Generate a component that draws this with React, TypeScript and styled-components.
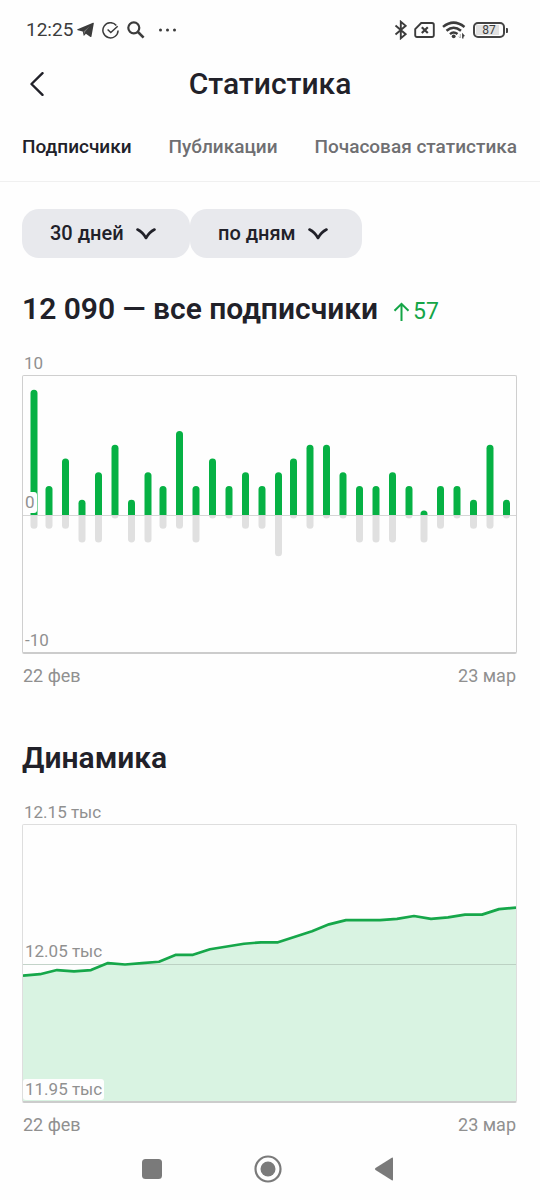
import React from "react";
import styled, { createGlobalStyle } from "styled-components";

const GlobalStyle = createGlobalStyle`
  *, *::before, *::after { box-sizing: border-box; }
  body {
    margin: 0;
    background: #fefefe;
    color: #212129;
    font-family: Roboto, "Noto Sans", sans-serif;
  }
  button, select { font: inherit; color: inherit; }
`;

const Screen = styled.div`
  display: flex;
  flex-direction: column;
  min-height: 100vh;
`;

const StatusBar = styled.div`
  display: flex;
  justify-content: space-between;
  align-items: center;
  height: 60px;
  padding: 0 32px 0 26px;
  color: #3c3c3c;
`;

const StatusGroup = styled.div<{ $gap: number }>`
  display: flex;
  align-items: center;
  gap: ${(p) => p.$gap}px;
`;

const Clock = styled.time`
  font-size: 19px;
  line-height: 24px;
  margin-right: -4px;
`;

const Icon = styled.svg`
  display: block;
  flex: none;
`;

const Battery = styled.div`
  display: flex;
  align-items: center;
`;

const BatteryBody = styled.div`
  display: flex;
  width: 32px;
  height: 16px;
  padding: 1px;
  border: 2px solid #444;
  border-radius: 5px;
`;

const BatteryLevel = styled.span`
  flex: 1;
  background: linear-gradient(to right, #e2e2e2 87%, transparent 87%);
  font-size: 12px;
  line-height: 11px;
  text-align: center;
`;

const BatteryTip = styled.span`
  width: 2px;
  height: 5px;
  margin-left: 1px;
  border-radius: 0 1px 1px 0;
  background: #444;
`;

const Header = styled.header`
  display: grid;
  grid-template-columns: 48px 1fr 48px;
  align-items: center;
  height: 48px;
  padding: 0 13px;
`;

const IconButton = styled.button`
  display: grid;
  place-items: center;
  height: 48px;
  padding: 0;
  border: 0;
  background: none;
  cursor: pointer;
`;

const Title = styled.h1`
  margin: 0;
  font-size: 30px;
  font-weight: 500;
  line-height: 40px;
  text-align: center;
`;

const Tabs = styled.nav`
  display: flex;
  justify-content: space-between;
  height: 74px;
  padding: 27px 23px 0 22px;
  border-bottom: 1px solid #f0f0f0;
`;

const Tab = styled.a<{ $active?: boolean }>`
  color: ${(p) => (p.$active ? "#212129" : "#6f6f72")};
  font-size: 19px;
  font-weight: 500;
  line-height: 24px;
  text-decoration: none;
  white-space: nowrap;
`;

const Main = styled.main`
  flex: 1;
  padding: 27px 23px 0 22px;
`;

const Filters = styled.div`
  display: flex;
`;

const Filter = styled.label`
  display: grid;
  align-items: center;
  & > * { grid-area: 1 / 1; }
  & > svg {
    justify-self: end;
    margin-right: 34px;
    pointer-events: none;
  }
`;

const FilterSelect = styled.select`
  appearance: none;
  height: 49px;
  padding: 0 66px 1px 28px;
  border: 0;
  border-radius: 17px;
  background: #e8e9ed;
  font-size: 20px;
  font-weight: 500;
`;

const HeadingRow = styled.div`
  display: flex;
  align-items: center;
  gap: 15px;
  margin-top: 31px;
`;

const Heading = styled.h2`
  margin: 0;
  font-size: 30px;
  font-weight: 600;
  line-height: 40px;
  white-space: nowrap;
`;

const Growth = styled.span`
  display: flex;
  align-items: center;
  gap: 3px;
  padding-top: 6px;
  color: #14a547;
  font-size: 23px;
  line-height: 28px;
`;

const Figure = styled.figure`
  margin: 23px 0 0;
  color: #909090;
  font-size: 18px;
  line-height: 22px;
`;

const TopLabel = styled.div`
  padding: 0 2px;
  margin-bottom: 1px;
  font-size: 17px;
`;

const Plot = styled.div<{ $line: string }>`
  position: relative;
  border: 1px solid ${(p) => p.$line};
  border-bottom: 2px solid #cccccc;
  border-radius: 2px;
`;

const PlotDrawing = styled.svg`
  display: block;
  width: 100%;
  height: auto;
`;

const AxisLabel = styled.span<{ $level: "middle" | "bottom" }>`
  position: absolute;
  left: 0;
  bottom: ${(p) => (p.$level === "middle" ? "calc(50% + 1px)" : "1px")};
  padding: 0 2px;
  border-radius: 3px;
  background: #fefefe;
  font-size: 17px;
  line-height: 21px;
`;

const Dates = styled.figcaption`
  display: flex;
  justify-content: space-between;
  margin-top: 11px;
  padding: 0 1px;
`;

const Section = styled.section`
  & + & { margin-top: 51px; }
`;

const SystemNav = styled.div`
  display: flex;
  justify-content: center;
  align-items: center;
  gap: 88px;
  height: 65px;
  padding-right: 4px;
`;

const SystemButton = styled(IconButton)`
  width: 28px;
`;

const GREEN = "#06b144";

const days = [
  { x: 11, up: 9, down: 1 }, { x: 26, up: 2, down: 1 }, { x: 42.5, up: 4, down: 1 },
  { x: 59, up: 1, down: 2 }, { x: 75.5, up: 3, down: 2 }, { x: 92, up: 5, down: 0 },
  { x: 108.5, up: 1, down: 2 }, { x: 125, up: 3, down: 2 }, { x: 140, up: 2, down: 1 },
  { x: 156.5, up: 6, down: 1 }, { x: 173, up: 2, down: 2 }, { x: 189.5, up: 4, down: 0 },
  { x: 206, up: 2, down: 0 }, { x: 222.5, up: 3, down: 1 }, { x: 239, up: 2, down: 1 },
  { x: 255.5, up: 3, down: 3 }, { x: 270.5, up: 4, down: 0 }, { x: 287, up: 5, down: 1 },
  { x: 303.5, up: 5, down: 0 }, { x: 320, up: 3, down: 0 }, { x: 336.5, up: 2, down: 2 },
  { x: 353, up: 2, down: 2 }, { x: 369.5, up: 3, down: 2 }, { x: 386, up: 2, down: 0 },
  { x: 401, up: 0, down: 2 }, { x: 417.5, up: 2, down: 1 }, { x: 434, up: 2, down: 0 },
  { x: 450.5, up: 1, down: 1 }, { x: 467, up: 5, down: 1 }, { x: 483.5, up: 1, down: 0 },
];

const totals = [
  12042, 12043, 12046, 12045, 12046, 12051, 12050, 12051, 12052, 12057,
  12057, 12061, 12063, 12065, 12066, 12066, 12070, 12074, 12079, 12082,
  12082, 12082, 12083, 12085, 12083, 12084, 12086, 12086, 12090, 12091,
];

function bar(x: number, base: number, tip: number) {
  const r = Math.min(3.5, Math.abs(base - tip));
  const s = Math.sign(tip - base);
  return `M${x - 3.5} ${base}V${tip - s * r}A3.5 ${r} 0 0 ${s < 0 ? 1 : 0} ${x + 3.5} ${tip - s * r}V${base}Z`;
}

function BarChart() {
  return (
    <PlotDrawing viewBox="0 0 493 276" role="img" aria-label="Подписчики по дням">
      {days.map((d) => (
        <g key={d.x}>
          <path d={bar(d.x, 139, 142.5 + d.down * 13.75 - (d.down ? 3.5 : 0))} fill="#e0e0e0" />
          <path d={bar(d.x, 139.5, d.up ? 137.5 - d.up * 13.75 : 134.5)} fill={GREEN} />
        </g>
      ))}
      <path d="M0 139.5H493" stroke="#d6d6d6" />
    </PlotDrawing>
  );
}

function LineChart() {
  const line = totals
    .map((v, i) => `${(i * 493) / 29} ${139.5 - (v - 12050) * 1.385}`)
    .join("L");
  return (
    <PlotDrawing viewBox="0 0 493 276" role="img" aria-label="Динамика подписчиков">
      <path d={`M${line}V276H0Z`} fill="#d9f3e2" />
      <path d="M0 139.5H493" stroke="#b4c8bb" strokeOpacity="0.8" />
      <path d={`M${line}`} fill="none" stroke="#16a74a" strokeWidth="2.7" strokeLinejoin="round" />
    </PlotDrawing>
  );
}

function Chevron() {
  return (
    <Icon width="20" height="12" viewBox="0 0 20 12" fill="none" stroke="#212129" strokeWidth="2.6" strokeLinecap="round" strokeLinejoin="round">
      <path d="M1.500 1.500C5 3.200 7.800 6 10 10C12.200 6 15 3.200 18.500 1.500" />
    </Icon>
  );
}

export default function App() {
  return (
    <Screen>
      <GlobalStyle />
      <StatusBar>
        <StatusGroup $gap={8}>
          <Clock>12:25</Clock>
          <Icon width="17" height="16" viewBox="0 0 17 16" fill="#3c3c3c">
            <path d="M.5 7.300 16 .7q1-.3.800.7L14.500 14.200q-.3 1.300-1.400.6L8.900 11.700 6.800 14 5.700 9.400.8 8.300Q-.3 7.800.5 7.300Z" />
            <path d="M6.500 9.600 12.500 4.500 8.200 9.800 7.200 12Z" fill="#777" />
          </Icon>
          <Icon width="17" height="17" viewBox="0 0 17 17" fill="none" stroke="#3c3c3c" strokeWidth="1.500">
            <path d="M14.300 3.400A7.600 7.600 0 1 0 16.100 8.500" />
            <path d="m5.600 7.500 3.200 3L15.700 4.200" />
          </Icon>
          <Icon width="18" height="18" viewBox="0 0 18 18" fill="none" stroke="#3c3c3c">
            <circle cx="6.800" cy="6.800" r="5.500" strokeWidth="2.200" />
            <path d="m11 11 5.600 5.600" strokeWidth="2.600" />
          </Icon>
          <Icon width="32" height="18" viewBox="0 0 32 18" fill="#3c3c3c">
            <circle cx="7.500" cy="9" r="1.500" />
            <circle cx="14.500" cy="9" r="1.500" />
            <circle cx="21.500" cy="9" r="1.500" />
          </Icon>
        </StatusGroup>
        <StatusGroup $gap={7}>
          <Icon width="14" height="20" viewBox="0 0 14 20" fill="none" stroke="#3c3c3c" strokeWidth="1.900">
            <path d="m2.500 5.500 10.200 8.700L7.800 18.300V1.700l4.900 4.100L2.500 14.500" />
          </Icon>
          <Icon width="21" height="16" viewBox="0 0 21 16" fill="none" stroke="#3c3c3c" strokeWidth="1.900">
            <path d="M7.200 1H18a1.800 1.800 0 0 1 1.800 1.800V13.200A1.800 1.800 0 0 1 18 15H3A1.800 1.800 0 0 1 1.200 13.200V7.200Z" />
            <path d="m7.800 5.200 6 5.800m0-5.800-6 5.800" strokeWidth="2.200" />
          </Icon>
          <Icon width="24" height="18" viewBox="0 0 24 18" fill="none" stroke="#3c3c3c" strokeWidth="2.500">
            <path d="M1 5.900Q11.500-2.700 22.500 5.900" />
            <path d="M4.500 9.700Q11.500 3.700 19 9.700" />
            <path d="M8 13.100Q11.500 9.900 15.500 13.100" />
            <circle cx="11.700" cy="15.300" r="1.900" fill="#3c3c3c" stroke="none" />
            <path d="M18.300 13v4M16.800 15.500l1.500 1.500" strokeWidth="1" stroke="#aaa" />
            <path d="M20.800 17.500V13.500l1.500 1.700" strokeWidth="1.400" />
          </Icon>
          <Battery>
            <BatteryBody>
              <BatteryLevel>87</BatteryLevel>
            </BatteryBody>
            <BatteryTip />
          </Battery>
        </StatusGroup>
      </StatusBar>

      <Header>
        <IconButton type="button" aria-label="Назад">
          <Icon width="14" height="24" viewBox="0 0 14 24" fill="none" stroke="#212129" strokeWidth="2.400" strokeLinecap="round" strokeLinejoin="round">
            <path d="M12.500 1.200 1.500 12l11 10.800" />
          </Icon>
        </IconButton>
        <Title>Статистика</Title>
      </Header>

      <Tabs>
        <Tab href="#subscribers" $active aria-current="page">Подписчики</Tab>
        <Tab href="#posts">Публикации</Tab>
        <Tab href="#hourly">Почасовая статистика</Tab>
      </Tabs>

      <Main>
        <Filters>
          <Filter>
            <FilterSelect aria-label="Период">
              <option>30 дней</option>
            </FilterSelect>
            <Chevron />
          </Filter>
          <Filter>
            <FilterSelect aria-label="Группировка">
              <option>по дням</option>
            </FilterSelect>
            <Chevron />
          </Filter>
        </Filters>

        <Section>
          <HeadingRow>
            <Heading>12 090 — все подписчики</Heading>
            <Growth>
              <Icon width="17" height="20" viewBox="0 0 17 20" fill="none" stroke="#14a547" strokeWidth="2">
                <path d="M8.500 19V2M1.500 8.800l7-7 7 7" />
              </Icon>
              57
            </Growth>
          </HeadingRow>
          <Figure>
            <TopLabel>10</TopLabel>
            <Plot $line="#cfcfcf">
              <BarChart />
              <AxisLabel $level="middle">0</AxisLabel>
              <AxisLabel $level="bottom">-10</AxisLabel>
            </Plot>
            <Dates>
              <span>22 фев</span>
              <span>23 мар</span>
            </Dates>
          </Figure>
        </Section>

        <Section>
          <Heading>Динамика</Heading>
          <Figure>
            <TopLabel>12.15 тыс</TopLabel>
            <Plot $line="#dedede">
              <LineChart />
              <AxisLabel $level="middle">12.05 тыс</AxisLabel>
              <AxisLabel $level="bottom">11.95 тыс</AxisLabel>
            </Plot>
            <Dates>
              <span>22 фев</span>
              <span>23 мар</span>
            </Dates>
          </Figure>
        </Section>
      </Main>

      <SystemNav>
        <SystemButton type="button" aria-label="Недавние">
          <Icon width="20" height="20" viewBox="0 0 20 20" fill="#7a7a7a">
            <rect width="20" height="20" rx="3.500" />
          </Icon>
        </SystemButton>
        <SystemButton type="button" aria-label="Домой">
          <Icon width="28" height="28" viewBox="0 0 28 28" fill="#7a7a7a">
            <circle cx="14" cy="14" r="12.500" fill="none" stroke="#7a7a7a" strokeWidth="2.200" />
            <circle cx="14" cy="14" r="7.500" />
          </Icon>
        </SystemButton>
        <SystemButton type="button" aria-label="Вернуться">
          <Icon width="20" height="24" viewBox="0 0 20 24" fill="#7a7a7a">
            <path d="M17.800.8q1.200-.6 1.200.8V22.400q0 1.400-1.200.8L1.500 12.900q-1.300-.9 0-1.800Z" />
          </Icon>
        </SystemButton>
      </SystemNav>
    </Screen>
  );
}
